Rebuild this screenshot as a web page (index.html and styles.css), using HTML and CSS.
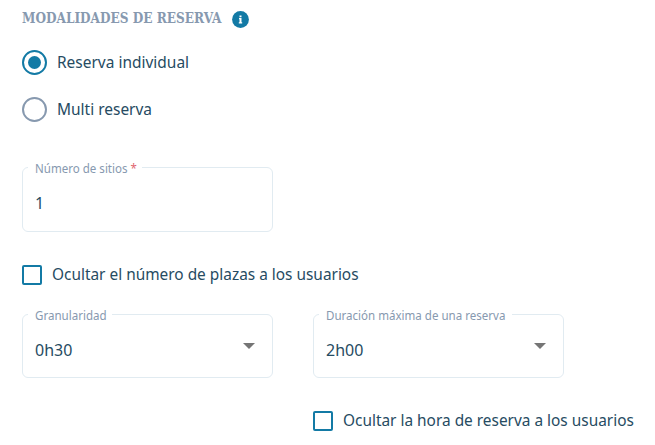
FILE: index.html
```
<!DOCTYPE html>
<html lang="es">
<head>
<meta charset="utf-8">
<title>Modalidades de reserva</title>
<link rel="stylesheet" href="styles.css">
</head>
<body>
<main class="form">
  <header class="heading">
    <h1 class="title"><span class="fit fit-title">MODALIDADES DE RESERVA</span></h1>
    <svg class="info" viewBox="0 0 17 17"><circle cx="8.5" cy="8.5" r="8.4" fill="#137aa5"/><path d="M7.5 4.5h2v1.7h-2zM7 7h2.5v4.3h.7v1.2H6.8v-1.2h.7V8.2H7z" fill="#fff"/></svg>
  </header>
  <div class="option"><span class="radio radio-on"></span><span class="fit fit-option">Reserva individual</span></div>
  <div class="option"><span class="radio"></span><span class="fit fit-option">Multi reserva</span></div>
  <fieldset class="field field-text">
    <legend class="legend legend-sites"><span class="fit fit-label">Número de sitios <b class="required">*</b></span></legend>
    <span class="fit fit-value">1</span>
  </fieldset>
  <div class="check check-places"><span class="box"></span><span class="fit fit-check">Ocultar el número de plazas a los usuarios</span></div>
  <div class="row">
    <fieldset class="field">
      <legend class="legend legend-gran"><span class="fit fit-label">Granularidad</span></legend>
      <span class="fit fit-value">0h30</span><i class="arrow"></i>
    </fieldset>
    <fieldset class="field">
      <legend class="legend legend-duration"><span class="fit fit-label">Duración máxima de una reserva</span></legend>
      <span class="fit fit-value">2h00</span><i class="arrow"></i>
    </fieldset>
  </div>
  <div class="check check-hour"><span class="box"></span><span class="fit fit-check">Ocultar la hora de reserva a los usuarios</span></div>
</main>
</body>
</html>
```
FILE: styles.css
```
* { box-sizing: border-box; }
body {
  margin: 0;
  background: #fff;
  color: #264b62;
  font: 17px/24px "Noto Sans", sans-serif;
  overflow: hidden;
}
.form { padding: 8px 0 0 22px; }
.heading { display: flex; align-items: center; height: 20px; margin-bottom: 22px; }
.title {
  width: 199px;
  margin: 0;
  color: #8799af;
  font: bold 14.5px/20px "DejaVu Serif", serif;
}
.info { width: 17px; height: 17px; margin: 3px 0 0 11px; }
.fit { display: inline-block; white-space: nowrap; transform-origin: 0 50%; }
.fit-title { transform: scaleX(.836); }
.fit-option { transform: translateY(-1px) scaleX(.91); }
.fit-check { transform: translateY(-1px) scaleX(.906); }
.fit-value { transform: translateY(1px) scaleX(.94); }
.fit-label { transform: translateY(2px) scaleX(.962); }
.option { display: flex; align-items: center; gap: 10px; height: 25px; margin-bottom: 22px; }
.radio {
  display: grid;
  flex: none;
  place-items: center;
  width: 25px;
  height: 25px;
  border: 2px solid #8799af;
  border-radius: 50%;
}
.radio-on { border-color: #137aa5; }
.radio-on::before { content: ""; width: 13px; height: 13px; border-radius: 50%; background: #137aa5; }
.field {
  display: flex;
  align-items: flex-start;
  justify-content: space-between;
  width: 251px;
  height: 73px;
  margin: 0;
  padding: 14px 17px 0 12px;
  border: 1px solid #e1ebf1;
  border-radius: 6px;
}
.field-text { height: 74px; margin-top: 36px; }
.legend {
  height: 18px;
  margin-left: -7px;
  padding: 0 0 0 7px;
  color: #8799af;
  font-size: 12px;
  line-height: 18px;
}
.legend-sites { width: 114px; }
.legend-gran { width: 84px; }
.legend-duration { width: 193px; }
.required { color: #df6672; font-weight: normal; }
.arrow {
  margin-top: 6px;
  border: 6px solid transparent;
  border-top-color: #757575;
  border-bottom: 0;
}
.check { display: flex; align-items: center; gap: 10px; height: 20px; }
.box { flex: none; width: 20px; height: 20px; border: 2px solid #137aa5; border-radius: 2px; }
.check-places { margin-top: 33px; }
.row { display: flex; gap: 40px; margin-top: 20px; }
.check-hour { margin: 33px 0 0 291px; }
```
